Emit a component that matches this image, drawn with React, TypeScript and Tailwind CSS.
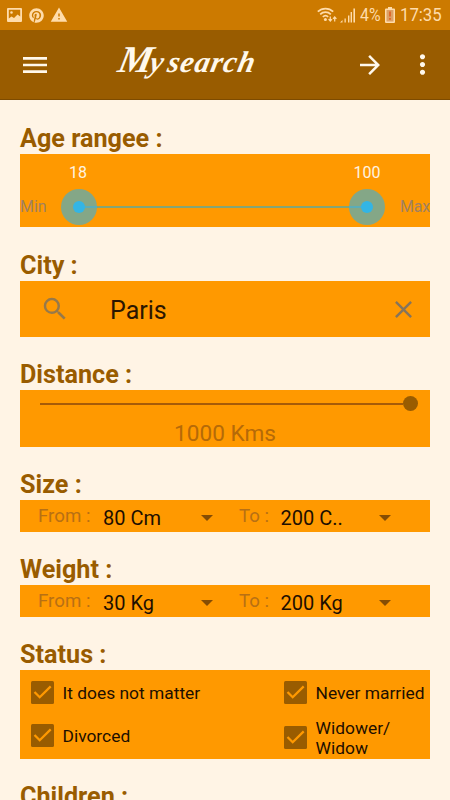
import type { ReactNode } from 'react';
import { MdMenu, MdArrowForward, MdMoreVert, MdSearch, MdClose, MdWarning } from 'react-icons/md';
import { FaPinterest } from 'react-icons/fa';

interface RangeRowProps {
  from: string;
  to: string;
}

const STATUSES = [
  { label: 'It does not matter', box: '', text: 'mt-px' },
  { label: 'Never married', box: '', text: 'mt-px' },
  { label: 'Divorced', box: '', text: 'mt-[2px]' },
  { label: 'Widower/\nWidow', box: 'mt-[4px]', text: 'mt-[5px]' },
];

function StatusBar() {
  return (
    <div className="h-[30px] bg-[#cc7a00] flex items-center justify-between pl-[7px] pr-[8px] text-[#ffdcaa]">
      <div className="flex items-center">
        <svg width="15" height="14" viewBox="0 0 15 14" className="block">
          <path
            fillRule="evenodd"
            fill="currentColor"
            d="M1 0h13a1 1 0 0 1 1 1v12a1 1 0 0 1-1 1H1a1 1 0 0 1-1-1V1a1 1 0 0 1 1-1zM1.800 1.800v8.700l2.700-2 2.500 1.500 3.500-3.500 2.700 2V1.800zM4.500 3.200a1.300 1.300 0 1 1 0 2.600 1.300 1.300 0 0 1 0-2.600z"
          />
        </svg>
        <FaPinterest className="w-[15px] h-[15px] ml-[7px]" />
        <MdWarning className="w-[18px] h-[18px] ml-[6px]" />
      </div>
      <div className="flex items-center">
        <svg width="21" height="16" viewBox="0 0 21 16" className="block" fill="none" stroke="currentColor">
          <path strokeWidth="1.700" d="M.8 4.700a11 11 0 0 1 15.400 0M3.200 7.300a7.600 7.600 0 0 1 10.600 0M5.800 9.800a4 4 0 0 1 5.400 0" />
          <circle cx="8.400" cy="12.500" r="1.500" fill="currentColor" stroke="none" />
          <path strokeWidth="1.200" d="M13.300 9.500v4.500M11.600 12.200l1.700 1.900 1.700-1.900M17.700 14.500V10M16 11.900l1.700-1.900 1.700 1.900" />
        </svg>
        <svg width="15" height="16" viewBox="0 0 15 16" className="block ml-[2px]" fill="currentColor">
          <path d="M0 15.500l2.500-2.500v2.500zM4.500 11.500h1.300v4H4.500zM8 8.500h1.400v7H8zM10.600 5h1.400v10.500h-1.400zM13.400 1.500h1.600v14h-1.600z" />
        </svg>
        <span className="ml-[5px] w-[21px] text-[18px] leading-[30px]">
          <span className="block origin-left scale-x-[0.88] whitespace-nowrap">4%</span>
        </span>
        <svg width="10" height="16" viewBox="0 0 10 16" className="block ml-[4px]">
          <path d="M3 0h4v1.500h2a1 1 0 0 1 1 1V15a1 1 0 0 1-1 1H1a1 1 0 0 1-1-1V2.500a1 1 0 0 1 1-1h2z" fill="#ffdcaa" />
          <path d="M1.500 3h7v11.500h-7z" fill="#dda064" />
          <path d="M4.200 4.500h1.600v5H4.200zM4.200 11h1.600v1.700H4.200z" fill="#df5c20" />
        </svg>
        <span className="ml-[5px] w-[42px] text-[18px] leading-[30px]">
          <span className="block origin-left scale-x-[0.93] whitespace-nowrap">17:35</span>
        </span>
      </div>
    </div>
  );
}

function Header() {
  return (
    <header className="h-[70px] bg-[#995c00] border-b border-[#7d4b00] flex items-center text-[#fff8ec]">
      <MdMenu className="w-[32px] h-[32px] ml-[19px]" />
      <h1 className="ml-[68px] w-[142px] whitespace-nowrap font-['Liberation_Serif',serif] italic font-bold text-[30px] leading-[40px] -mt-[8px]">
        <span className="block origin-left -skew-x-12">
          <span className="text-[38px] -tracking-[2px]">M</span>y <span className="-ml-[3px] tracking-[1px]">search</span>
        </span>
      </h1>
      <MdArrowForward className="w-[30px] h-[30px] ml-auto" />
      <MdMoreVert className="w-[31px] h-[31px] ml-[22px] mr-[12px]" />
    </header>
  );
}

function Section({ title, children }: { title: string; children?: ReactNode }) {
  return (
    <section className="pt-[23px]">
      <h2 className="h-[30px] text-[25.2px] leading-[30px] font-bold text-[#995c00]">{title}</h2>
      {children}
    </section>
  );
}

function Thumb({ line }: { line: string }) {
  return (
    <div className="relative w-[36px] h-[36px] rounded-full bg-[#84a787] flex items-center justify-center">
      <div className={`absolute top-[17px] h-[2px] bg-[#5aadb8] ${line}`} />
      <div className="relative w-[12px] h-[12px] rounded-full bg-[#33b5e5]" />
    </div>
  );
}

function AgeRange() {
  return (
    <div className="h-[73px] bg-[#ff9900] pt-[9px]">
      <div className="flex justify-between pl-[38px] pr-[43px] w-full text-[16px] leading-[20px] text-[#fff4e0]">
        <span className="w-[40px] text-center">18</span>
        <span className="w-[40px] text-center">100</span>
      </div>
      <div className="mt-[6px] flex items-center text-[16px] text-[#a18160] overflow-hidden">
        <span className="w-[41px]">Min</span>
        <div className="relative w-[324px] flex items-center justify-between">
          {/* Track runs between the two thumb centers */}
          <div className="absolute left-[18px] right-[18px] top-[17px] h-[2px] bg-[#84a577]" />
          <Thumb line="left-[18px] right-0" />
          <Thumb line="left-0 right-[18px]" />
        </div>
        <span className="ml-[15px] -tracking-[0.2px]">Max</span>
      </div>
    </div>
  );
}

function CityField() {
  return (
    <div className="h-[56px] bg-[#ff9900] flex items-center pl-[20px] pr-[12px]">
      <MdSearch className="w-[30px] h-[30px] text-[#96794a]" />
      <span className="ml-[40px] mt-[3px] text-[25px] leading-[30px] text-[#2b1600]">Paris</span>
      <MdClose className="w-[29px] h-[29px] ml-auto text-[#85755c]" />
    </div>
  );
}

function DistanceSlider() {
  return (
    <div className="h-[57px] bg-[#ff9900] pt-[6px]">
      <div className="flex items-center pl-[20px] pr-[12px]">
        <div className="flex-1 h-[2px] bg-[#a65b08]" />
        <div className="w-[15px] h-[15px] rounded-full bg-[#995c00]" />
      </div>
      <p className="mt-[8px] text-center text-[22.6px] leading-[30px] text-[#b56a08]">1000 Kms</p>
    </div>
  );
}

function Caret() {
  return (
    <svg width="12" height="6" viewBox="0 0 12 6" className="block mt-[3px]">
      <path d="M0 0h12L6 6z" fill="#854d04" />
    </svg>
  );
}

function RangeRow({ from, to }: RangeRowProps) {
  return (
    <div className="h-[32px] bg-[#ff9900] flex items-center text-[20px] leading-[32px]">
      <span className="ml-[18px] w-[65px] text-[18.7px] text-[#b87014]">From :</span>
      <span className="w-[98px] mt-[4px] text-[#1d0f00]">{from}</span>
      <Caret />
      <span className="ml-[26px] w-[41.5px] text-[18.7px] text-[#b87014]">To :</span>
      <span className="w-[98px] mt-[4px] text-[#1d0f00]">{to}</span>
      <Caret />
    </div>
  );
}

function CheckBox() {
  return (
    <svg width="23" height="23" viewBox="0 0 23 23" className="block shrink-0">
      <rect width="23" height="23" rx="1.500" fill="#995c00" />
      <path d="M3.500 11l5.200 5.200L19.700 5.400" fill="none" stroke="#ff9900" strokeWidth="2.300" />
    </svg>
  );
}

function StatusGrid() {
  return (
    <div className="h-[89px] bg-[#ff9900] grid grid-cols-[253px_1fr] grid-rows-[45px_40px] pl-[11px]">
      {STATUSES.map(status => (
        <div key={status.label} className="flex items-center">
          <div className={status.box}>
            <CheckBox />
          </div>
          <span className={`ml-[8.5px] text-[17.4px] leading-[20px] text-[#1d0f00] whitespace-pre ${status.text}`}>
            {status.label}
          </span>
        </div>
      ))}
    </div>
  );
}

export default function App() {
  return (
    <div className="w-[450px] h-[800px] overflow-hidden bg-[#fff4e5] font-[Roboto,sans-serif]">
      <StatusBar />
      <Header />
      <main className="px-[20px] pt-[1px]">
        <Section title="Age rangee :">
          <AgeRange />
        </Section>
        <div className="pt-px">
          <Section title="City :">
            <CityField />
          </Section>
        </div>
        <Section title="Distance :">
          <DistanceSlider />
        </Section>
        <Section title="Size :">
          <RangeRow from="80 Cm" to="200 C.." />
        </Section>
        <Section title="Weight :">
          <RangeRow from="30 Kg" to="200 Kg" />
        </Section>
        <Section title="Status :">
          <StatusGrid />
        </Section>
        <Section title="Children :" />
      </main>
    </div>
  );
}
